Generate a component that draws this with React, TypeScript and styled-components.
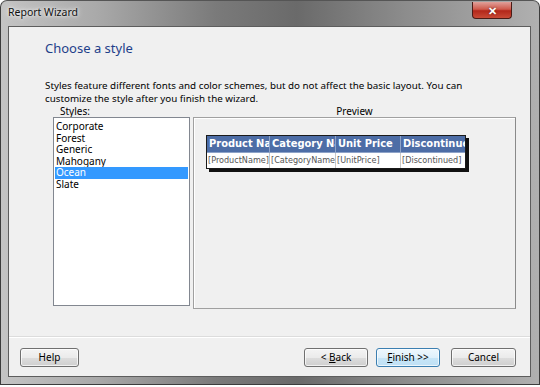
import React, { useState } from "react";
import styled, { createGlobalStyle } from "styled-components";

const GlobalStyle = createGlobalStyle`
    html, body {
        margin: 0;
        padding: 0;
        background: #ffffff;
    }
    body {
        font-family: "Noto Sans", "Liberation Sans", sans-serif;
    }
`;

const styleNames = ["Corporate", "Forest", "Generic", "Mahogany", "Ocean", "Slate"];

const columns = [
    { header: "Product Name", field: "[ProductName]", width: 63 },
    { header: "Category Name", field: "[CategoryName]", width: 66 },
    { header: "Unit Price", field: "[UnitPrice]", width: 65 },
    { header: "Discontinued", field: "[Discontinued]", width: 64 },
];

const App: React.FC = () => {
    const [selected, setSelected] = useState("Ocean");

    return (
        <>
            <GlobalStyle />
            <Window>
                <TitleBar>
                    <Title>Report Wizard</Title>
                    <CloseButton>✕</CloseButton>
                </TitleBar>
                <Client>
                    <Content>
                        <Heading>Choose a style</Heading>
                        <Description>
                            Styles feature different fonts and color schemes, but do not affect the basic layout. You can
                            <br />
                            customize the style after you finish the wizard.
                        </Description>
                        <Panels>
                            <ListLabel>Styles:</ListLabel>
                            <PreviewLabel>Preview</PreviewLabel>
                            <StyleList>
                                {styleNames.map((name) => (
                                    <StyleItem
                                        key={name}
                                        $selected={name === selected}
                                        onClick={() => setSelected(name)}
                                    >
                                        {name}
                                    </StyleItem>
                                ))}
                            </StyleList>
                            <PreviewBox>
                                <PreviewTable>
                                    <HeaderRow>
                                        {columns.map((c) => (
                                            <HeaderCell key={c.header} $width={c.width}>
                                                {c.header}
                                            </HeaderCell>
                                        ))}
                                    </HeaderRow>
                                    <DataRow>
                                        {columns.map((c) => (
                                            <DataCell key={c.field} $width={c.width}>
                                                {c.field}
                                            </DataCell>
                                        ))}
                                    </DataRow>
                                </PreviewTable>
                            </PreviewBox>
                        </Panels>
                    </Content>
                    <Footer>
                        <Button $width={59}>Help</Button>
                        <RightButtons>
                            <Button $width={64}>
                                &lt; <u>B</u>ack
                            </Button>
                            <Button $width={64} $primary>
                                <u>F</u>inish &gt;&gt;
                            </Button>
                            <CancelButton $width={65}>Cancel</CancelButton>
                        </RightButtons>
                    </Footer>
                </Client>
            </Window>
        </>
    );
};

const Window = styled.div`
    width: 540px;
    height: 385px;
    box-sizing: border-box;
    padding: 0 8px 7px 7px;
    border-radius: 7px 7px 0 0;
    background: linear-gradient(
        90deg,
        #c4c4c4 0%,
        #a9a9a9 18%,
        #7a7a7a 40%,
        #6a6a6a 55%,
        #8c8c8c 75%,
        #b0b0b0 100%
    );
    display: flex;
    flex-direction: column;
    border: 1px solid #3c3c3c;
    border-top-color: #555;
`;

const TitleBar = styled.div`
    height: 25px;
    display: flex;
    align-items: flex-start;
    justify-content: space-between;
`;

const Title = styled.span`
    font-family: "Noto Sans", "Liberation Sans", sans-serif;
    font-size: 10.5px;
    color: #111;
    padding-top: 4px;
    text-shadow: 0 0 6px rgba(255, 255, 255, 0.9), 0 0 3px rgba(255, 255, 255, 0.9);
`;

const CloseButton = styled.div`
    width: 40px;
    height: 17px;
    margin-top: 1px;
    margin-right: 19px;
    box-sizing: border-box;
    border: 1px solid #4a1b16;
    border-top: none;
    border-radius: 0 0 4px 4px;
    background: linear-gradient(180deg, #e0a09a 0%, #cf5a4c 45%, #b3271a 55%, #c94a36 100%);
    color: #fff;
    font-size: 11px;
    font-weight: 700;
    display: flex;
    align-items: center;
    justify-content: center;
    text-shadow: 0 0 2px #5a1a12;
`;

const Client = styled.div`
    flex: 1;
    background: #f0f0f0;
    border: 1px solid #5d5d5d;
    display: flex;
    flex-direction: column;
    font-family: "Noto Sans", "Liberation Sans", sans-serif;
`;

const Content = styled.div`
    padding: 0 14px 0 36px;
    flex: 1;
    display: flex;
    flex-direction: column;
`;

const Heading = styled.div`
    margin-top: 11px;
    font-size: 13px;
    line-height: 20px;
    color: #1e3f8a;
`;

const Description = styled.div`
    margin-top: 21px;
    font-size: 9.8px;
    line-height: 13px;
    color: #000;
    white-space: nowrap;
`;

const Panels = styled.div`
    display: grid;
    grid-template-columns: 137px 1fr;
    grid-template-rows: 12px auto;
    column-gap: 3px;
    margin-left: 8px;
`;

const ListLabel = styled.div`
    font-size: 10px;
    line-height: 12px;
    padding-left: 7px;
    color: #000;
`;

const PreviewLabel = styled.div`
    font-size: 10px;
    line-height: 12px;
    text-align: center;
    color: #000;
`;

const StyleList = styled.div`
    height: 189px;
    background: #fff;
    border: 1px solid #828790;
    box-sizing: border-box;
    padding: 3px 1px;
    display: flex;
    flex-direction: column;
`;

const StyleItem = styled.div<{ $selected?: boolean }>`
    font-size: 10px;
    line-height: 11.5px;
    padding-left: 1px;
    color: ${(p) => (p.$selected ? "#fff" : "#000")};
    background: ${(p) => (p.$selected ? "#3399ff" : "transparent")};
    cursor: default;
`;

const PreviewBox = styled.div`
    height: 192px;
    box-sizing: border-box;
    border: 1px solid #a0a0a0;
    border-right-color: #8a8a8a;
    box-shadow: inset 1px 1px 0 #fff;
    padding: 12px;
`;

const PreviewTable = styled.div`
    display: inline-flex;
    flex-direction: column;
    border: 1px solid #1a1a1a;
    box-shadow: 3px 3px 0 #111;
    background: #fff;
    font-family: "DejaVu Sans Condensed", "DejaVu Sans", sans-serif;
`;

const HeaderRow = styled.div`
    display: flex;
    background: #4d6da6;
`;

const HeaderCell = styled.div<{ $width: number }>`
    width: ${(p) => p.$width}px;
    height: 17px;
    box-sizing: border-box;
    padding-left: 2px;
    border-right: 1px solid #8ea3c8;
    border-bottom: 1px solid #8ea3c8;
    font-size: 11px;
    font-weight: 700;
    line-height: 16px;
    color: #fff;
    white-space: nowrap;
    overflow: hidden;
    &:last-child {
        border-right: none;
    }
`;

const DataRow = styled.div`
    display: flex;
`;

const DataCell = styled.div<{ $width: number }>`
    width: ${(p) => p.$width}px;
    height: 15px;
    box-sizing: border-box;
    padding-left: 1px;
    border-right: 1px solid #c8c8c8;
    font-size: 9px;
    line-height: 15px;
    color: #555;
    white-space: nowrap;
    overflow: hidden;
    &:last-child {
        border-right: none;
    }
`;

const Footer = styled.div`
    border-top: 1px solid #dcdcdc;
    box-shadow: inset 0 1px 0 #fff;
    height: 40px;
    box-sizing: border-box;
    padding: 11px 14px 0 11px;
    display: flex;
    justify-content: space-between;
    align-items: flex-start;
`;

const RightButtons = styled.div`
    display: flex;
    gap: 8px;
`;

const Button = styled.button<{ $width: number; $primary?: boolean }>`
    width: ${(p) => p.$width}px;
    height: 19px;
    padding: 0;
    border: 1px solid ${(p) => (p.$primary ? "#3c7fb1" : "#707070")};
    border-radius: 3px;
    background: ${(p) =>
        p.$primary
            ? "linear-gradient(180deg, #eef7fd 0%, #dff0fb 50%, #c7e5f7 51%, #bfe0f5 100%)"
            : "linear-gradient(180deg, #f4f4f4 0%, #ebebeb 50%, #dddddd 51%, #cfcfcf 100%)"};
    box-shadow: inset 0 0 0 1px rgba(255, 255, 255, 0.7);
    font-family: "Noto Sans", "Liberation Sans", sans-serif;
    font-size: 10px;
    line-height: 17px;
    color: #000;
    u {
        text-decoration: underline;
    }
`;

const CancelButton = styled(Button)`
    margin-left: 3px;
`;

export default App;
